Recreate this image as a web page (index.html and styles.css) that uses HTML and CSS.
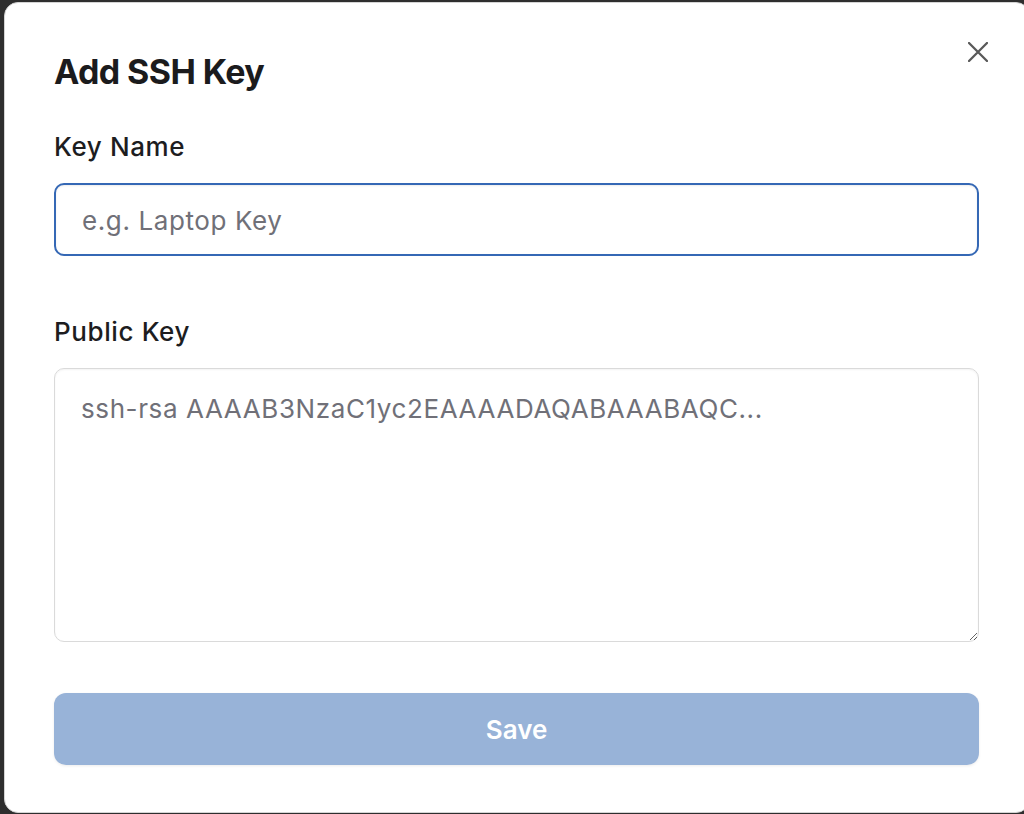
FILE: index.html
```html
<!DOCTYPE html>
<html lang="en">
<head>
<meta charset="utf-8">
<title>Add SSH Key</title>
<link rel="stylesheet" href="styles.css">
</head>
<body>
<div class="backdrop">
  <div class="modal" role="dialog" aria-labelledby="modal-title">
    <button class="close" type="button" aria-label="Close">
      <svg viewBox="0 0 20 20" width="20" height="20" aria-hidden="true">
        <path d="M1 1 L19 19 M19 1 L1 19" stroke="#595959" stroke-width="2.3" stroke-linecap="round" fill="none"/>
      </svg>
    </button>
    <h2 class="title" id="modal-title">Add SSH Key</h2>
    <form class="form">
      <div class="field field-name">
        <label class="label" for="key-name">Key Name</label>
        <input class="input" id="key-name" type="text" placeholder="e.g. Laptop Key">
      </div>
      <div class="field field-key">
        <label class="label" for="public-key">Public Key</label>
        <textarea class="textarea" id="public-key" placeholder="ssh-rsa AAAAB3NzaC1yc2EAAAADAQABAAABAQC..."></textarea>
      </div>
      <button class="save" type="button" disabled>Save</button>
    </form>
  </div>
</div>
</body>
</html>
```

FILE: styles.css
```css
* { box-sizing: border-box; }

html, body {
  margin: 0;
  padding: 0;
  height: 100%;
  overflow: hidden;
}

body {
  background: #2e2e2e;
  font-family: Inter, "Noto Sans", "Liberation Sans", sans-serif;
  color: #1d1d1f;
}

.backdrop {
  padding: 2px 0 0 4px;
}

.modal {
  position: relative;
  width: 1026px;
  height: 811px;
  background: #ffffff;
  border: 1px solid #d4d4d4;
  border-radius: 14px;
  padding: 49px 49px 0 49px;
}

.close {
  position: absolute;
  top: 39px;
  right: 41px;
  width: 20px;
  height: 20px;
  padding: 0;
  border: 0;
  background: transparent;
  cursor: pointer;
  display: flex;
}

.title {
  margin: 0;
  font-size: 34px;
  line-height: 40px;
  font-weight: 700;
  letter-spacing: -0.6px;
  color: #1b1b1d;
}

.form {
  display: flex;
  flex-direction: column;
  width: 925px;
}

.field {
  display: flex;
  flex-direction: column;
  gap: 20px;
}

.field-name { margin-top: 39px; }
.field-key { margin-top: 60px; }

.label {
  font-size: 26px;
  line-height: 32px;
  font-weight: 500;
  letter-spacing: 0.6px;
  color: #1d1d1f;
}

.input,
.textarea {
  width: 100%;
  font-family: Inter, "Noto Sans", "Liberation Sans", sans-serif;
  font-size: 26px;
  letter-spacing: 0.6px;
  color: #1d1d1f;
  background: #ffffff;
  border-radius: 10px;
  outline: none;
}

.input {
  height: 73px;
  padding: 2px 26px 0;
  border: 2px solid #3568b5;
  box-shadow: inset 0 1px 2px rgba(0, 0, 0, 0.08);
}

.textarea {
  height: 274px;
  padding: 23px 26px;
  line-height: 34px;
  border: 1.5px solid #dadada;
  box-shadow: inset 0 1px 2px rgba(0, 0, 0, 0.05);
  resize: vertical;
}

.input::placeholder,
.textarea::placeholder {
  color: #707078;
  opacity: 1;
}

.save {
  margin-top: 51px;
  height: 72px;
  width: 100%;
  border: 0;
  border-radius: 12px;
  background: #98b3d8;
  color: #ffffff;
  font-family: Inter, "Noto Sans", "Liberation Sans", sans-serif;
  font-size: 26px;
  font-weight: 600;
  box-shadow: 0 1px 3px rgba(0, 0, 0, 0.08);
}
```
